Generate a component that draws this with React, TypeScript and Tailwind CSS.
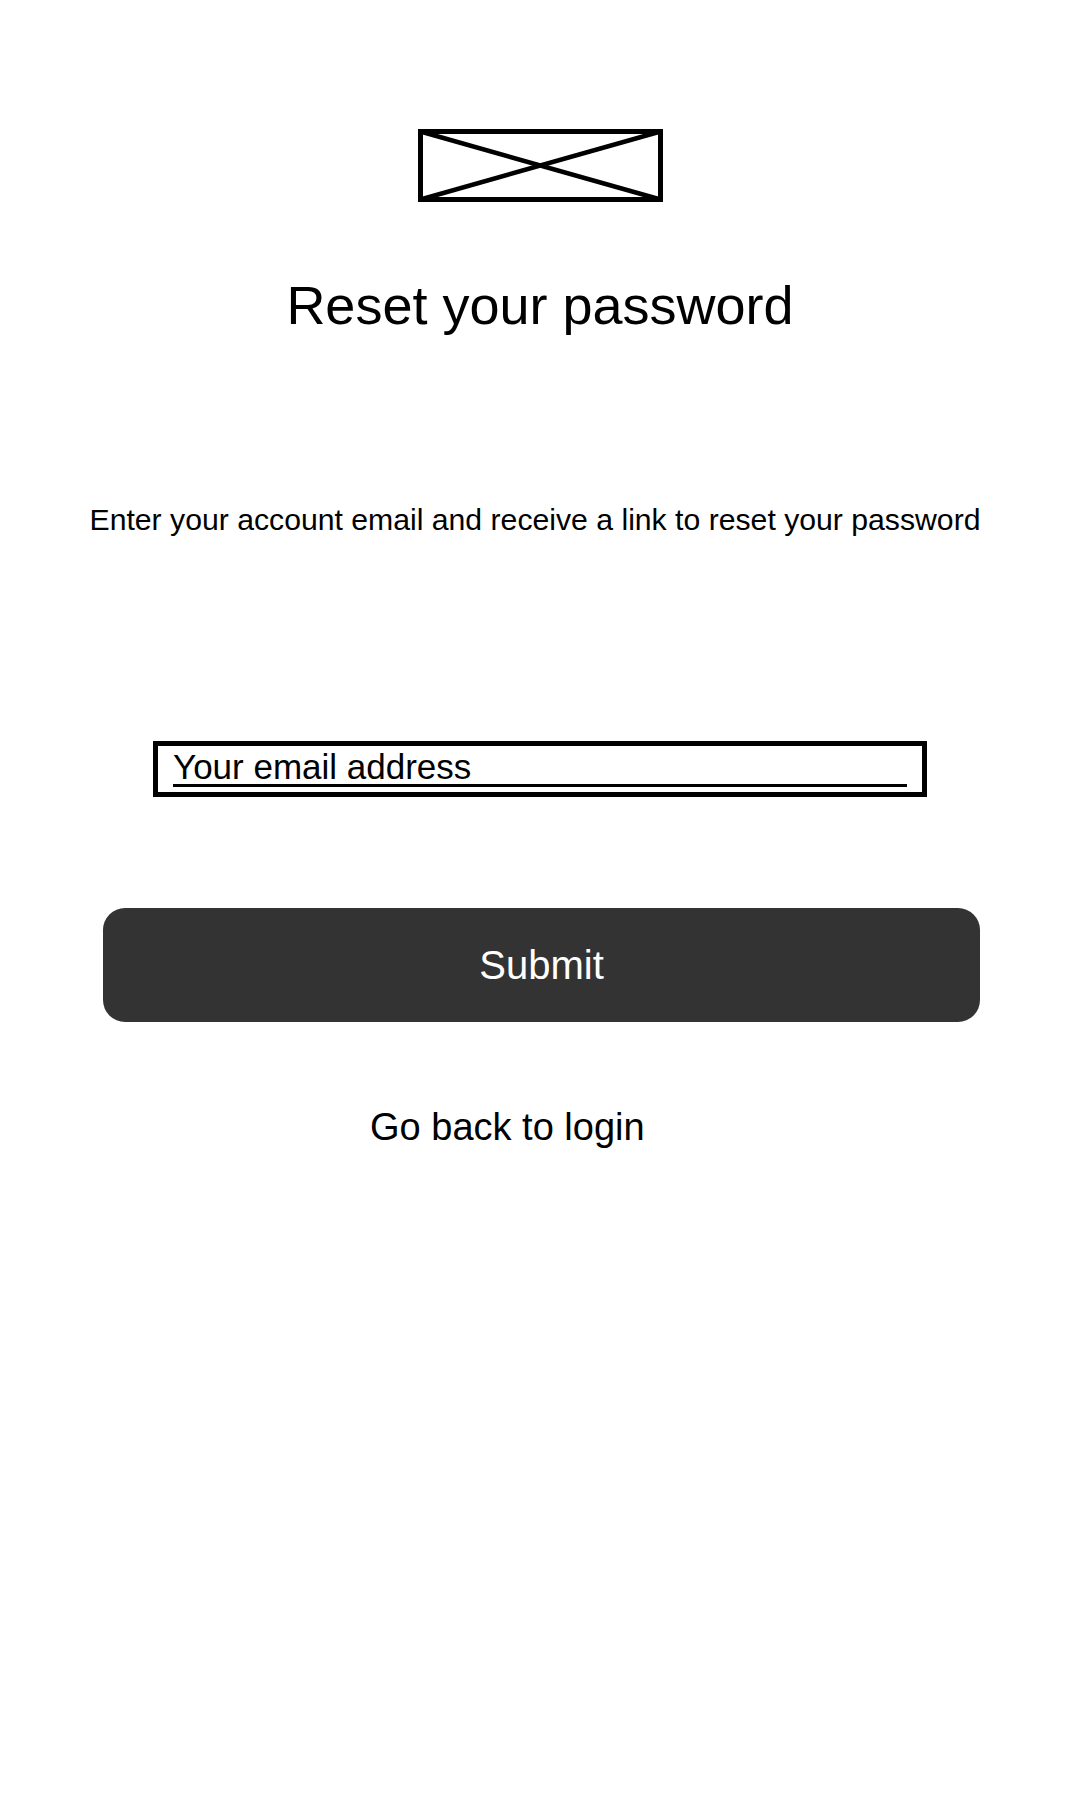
export default function App() {
  return (
    <div className="min-h-[1800px] w-[1080px] bg-white text-black font-['Liberation_Sans',Arial,sans-serif]">
      <div className="flex flex-col items-center pt-[129px]">
        {/* Logo placeholder */}
        <svg width="245" height="73" viewBox="0 0 245 73" className="block">
          <rect x="2.5" y="2.5" width="240" height="68" fill="none" stroke="#000" strokeWidth="5" />
          <line x1="2.5" y1="2.5" x2="242.5" y2="70.5" stroke="#000" strokeWidth="4.5" />
          <line x1="2.5" y1="70.5" x2="242.5" y2="2.5" stroke="#000" strokeWidth="4.5" />
        </svg>

        <h1 className="mt-[76px] text-[54px] leading-none font-normal">Reset your password</h1>

        <p className="mt-[173px] pr-[10px] text-[30.2px] leading-none">
          Enter your account email and receive a link to reset your password
        </p>

        {/* Email field */}
        <div className="mt-[206px] w-[774px] h-[56px] border-[5px] border-black pt-[4px] px-[15px]">
          <div className="h-[37px] border-b-[3px] border-black text-[35px] leading-[34px]">
            Your email address
          </div>
        </div>

        <button className="mt-[111px] ml-[3px] w-[877px] h-[114px] rounded-[22px] bg-[#333333] text-white text-[40px] leading-none flex items-center justify-center">
          Submit
        </button>

        <div className="mt-[86px] w-full pl-[370px] text-[38px] leading-none">Go back to login</div>
      </div>
    </div>
  );
}
